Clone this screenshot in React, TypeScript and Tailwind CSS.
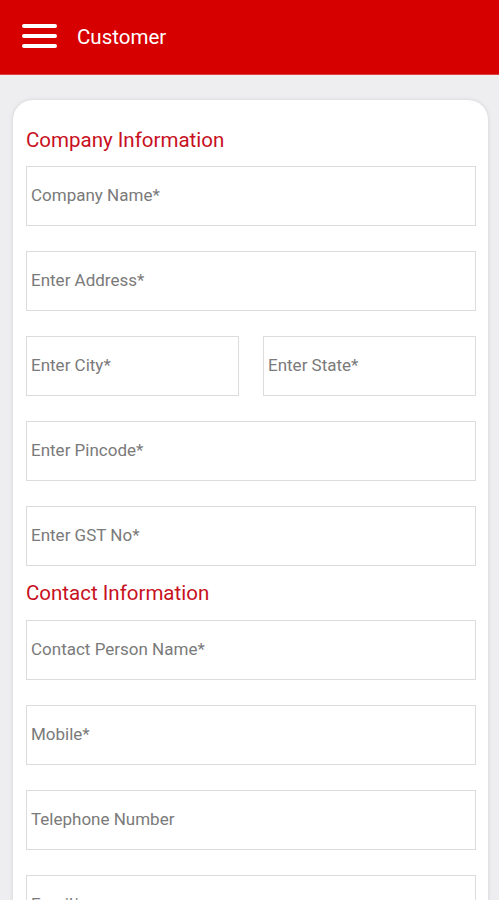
import React from "react";

function Field({ placeholder }: { placeholder: string }) {
  return (
    <div className="h-[60px] border border-[#dcdcdc] flex items-center pl-[4px] text-[17px] text-[#7a7a7a]">
      {placeholder}
    </div>
  );
}

export default function App() {
  return (
    <div className="w-[499px] h-[900px] overflow-hidden bg-[#eeeef0]" style={{ fontFamily: "Roboto, 'Noto Sans', sans-serif" }}>
      <div className="h-[75px] bg-[#d60000] flex items-center border-b border-[#e04040]">
        <div className="ml-[22px] w-[35px] flex flex-col gap-[6px] -mt-[2px]">
          <div className="h-[4px] bg-white rounded-full" />
          <div className="h-[4px] bg-white rounded-full" />
          <div className="h-[4px] bg-white rounded-full" />
        </div>
        <div className="ml-[20px] text-white text-[20.5px]">Customer</div>
      </div>
      <div className="pl-[13px] pr-[11px] pt-[25px]">
        <div className="bg-white rounded-[20px] shadow-[0_0_4px_rgba(0,0,0,0.12)] pl-[13px] pr-[12px] pt-[26px] pb-[40px]">
          <div className="text-[20.5px] leading-[28px] text-[#c8101e]">Company Information</div>
          <div className="mt-[12px] flex flex-col gap-[25px]">
            <Field placeholder="Company Name*" />
            <Field placeholder="Enter Address*" />
            <div className="flex gap-[24px]">
              <div className="flex-1"><Field placeholder="Enter City*" /></div>
              <div className="flex-1"><Field placeholder="Enter State*" /></div>
            </div>
            <Field placeholder="Enter Pincode*" />
            <Field placeholder="Enter GST No*" />
          </div>
          <div className="mt-[13px] text-[20.5px] leading-[28px] text-[#c8101e]">Contact Information</div>
          <div className="mt-[13px] flex flex-col gap-[25px]">
            <Field placeholder="Contact Person Name*" />
            <Field placeholder="Mobile*" />
            <Field placeholder="Telephone Number" />
            <Field placeholder="Email*" />
          </div>
        </div>
      </div>
    </div>
  );
}
